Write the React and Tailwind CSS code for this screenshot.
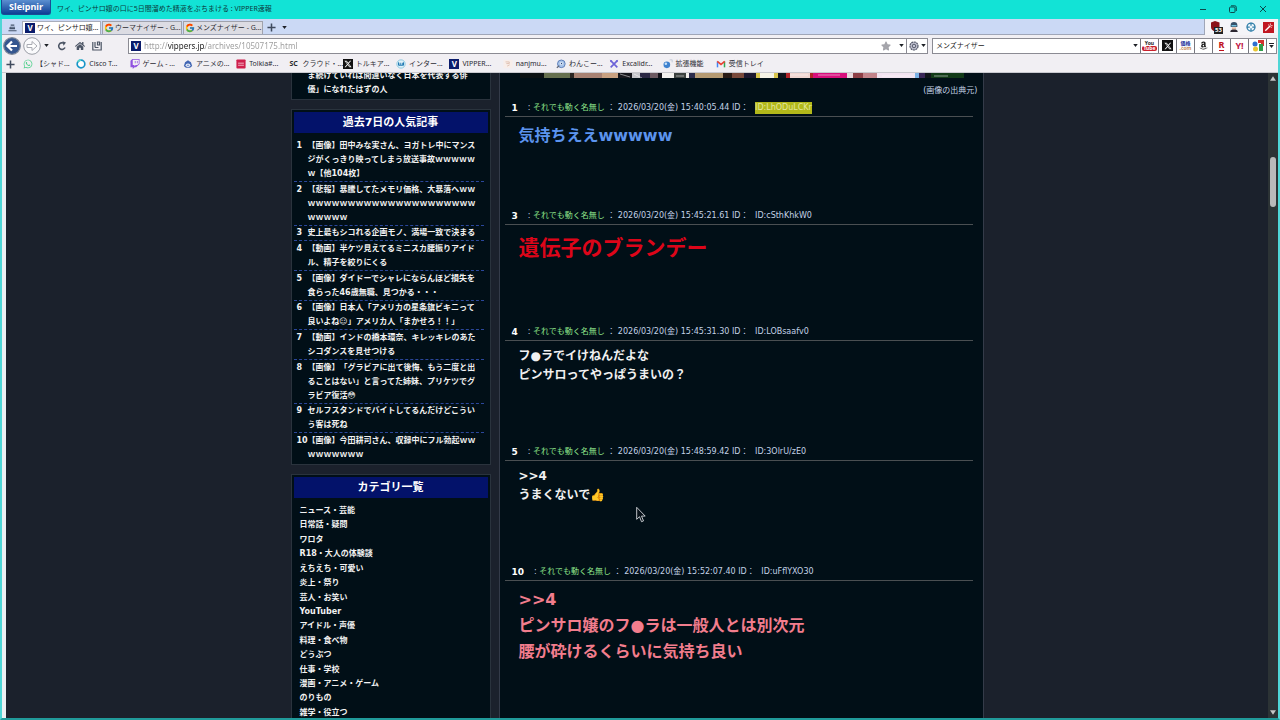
import React from "react";
import { FcGoogle } from "react-icons/fc";
import { FaWhatsapp, FaTwitch, FaStar, FaHome, FaAmazon } from "react-icons/fa";
import { FaXTwitter } from "react-icons/fa6";

const ranking = [
  "【画像】田中みな実さん、ヨガトレ中にマンスジがくっきり映ってしまう放送事故ｗｗｗｗｗｗ【他104枚】",
  "【悲報】暴騰してたメモリ価格、大暴落へｗｗｗｗｗｗｗｗｗｗｗｗｗｗｗｗｗｗｗｗｗｗｗｗｗｗｗｗ",
  "史上最もシコれる企画モノ、満場一致で決まる",
  "【動画】半ケツ見えてるミニスカ腰振りアイドル、精子を絞りにくる",
  "【画像】ダイドーでシャレにならんほど損失を食らった46歳無職、見つかる・・・",
  "【画像】日本人「アメリカの星条旗ビキニって良いよね☺」アメリカ人「まかせろ！！」",
  "【動画】インドの橋本環奈、キレッキレのあたシコダンスを見せつける",
  "【画像】「グラビアに出て後悔、もう二度と出ることはない」と言ってた姉妹、プリケツでグラビア復活😳",
  "セルフスタンドでバイトしてるんだけどこういう客は死ね",
  "【画像】今田耕司さん、収録中にフル勃起ｗｗｗｗｗｗｗｗｗ",
];

const categories = [
  "ニュース・芸能",
  "日常話・疑問",
  "ワロタ",
  "R18・大人の体験談",
  "えちえち・可愛い",
  "炎上・祭り",
  "芸人・お笑い",
  "YouTuber",
  "アイドル・声優",
  "料理・食べ物",
  "どうぶつ",
  "仕事・学校",
  "漫画・アニメ・ゲーム",
  "のりもの",
  "雑学・役立つ",
];

const posts = [
  {
    no: 1,
    time: "15:40:05.44",
    id: "ID:LhODuLCKr",
    marked: true,
    lines: ["気持ちええwwwww"],
    style: "text-[16px] leading-[26px] text-[#5c94ee]",
  },
  {
    no: 3,
    time: "15:45:21.61",
    id: "ID:cSthKhkW0",
    lines: ["遺伝子のブランデー"],
    style: "text-[21px] leading-[34px] text-[#dd0519]",
  },
  {
    no: 4,
    time: "15:45:31.30",
    id: "ID:LOBsaafv0",
    lines: ["フ●ラでイけねんだよな", "ピンサロってやっぱうまいの？"],
    style: "text-[12px] leading-[19px] text-[#f0f0f0]",
  },
  {
    no: 5,
    time: "15:48:59.42",
    id: "ID:3OlrU/zE0",
    lines: [">>4", "うまくないで👍"],
    style: "text-[12px] leading-[19px] text-[#f0f0f0]",
  },
  {
    no: 10,
    time: "15:52:07.40",
    id: "ID:uFflYXO30",
    lines: [">>4", "ピンサロ嬢のフ●ラは一般人とは別次元", "腰が砕けるくらいに気持ち良い"],
    style: "text-[16px] leading-[26px] text-[#f27d8d]",
  },
];

// x, width, colour of each slice of the thumbnail banner
const banner = [
  [0, 24, "#0c1214"], [24, 26, "#66704f"], [50, 4, "#2a2522"], [54, 28, "#a98273"], [82, 16, "#c9a181"],
  [98, 14, "#17171d"], [112, 8, "#c6c6cc"], [120, 10, "#2b2845"], [130, 8, "#6d5a62"], [138, 4, "#14131a"],
  [142, 12, "#f4f2f0"], [154, 12, "#3c4240"], [166, 3, "#f1efec"], [169, 6, "#2c2c4c"], [175, 28, "#b59a72"],
  [203, 9, "#2a1c16"], [212, 12, "#7a4a3c"], [224, 12, "#1c1830"], [236, 4, "#d9c54c"], [240, 14, "#f6f3e6"],
  [254, 4, "#d9c54c"], [258, 8, "#10131b"], [266, 4, "#b32429"], [270, 20, "#f0d6d1"], [290, 3, "#b32429"],
  [293, 34, "#d80f7c"], [327, 6, "#e9d7dc"], [333, 10, "#8e3f46"], [343, 14, "#c3848a"], [357, 38, "#f3e4f1"],
  [395, 4, "#7bb3e6"], [399, 6, "#3a2757"], [405, 6, "#111519"], [411, 33, "#123a17"],
];

function Caret({ className = "" }) {
  return (
    <svg viewBox="0 0 6 4" className={"w-[5px] h-[3px] shrink-0 " + className} aria-hidden="true">
      <path d="M0 0h6L3 4z" fill="#1d2026" />
    </svg>
  );
}

function VIcon() {
  return (
    <span className="w-[10px] h-[10px] shrink-0 bg-[#0b1c6b] text-white text-[8px] leading-[10px] font-bold text-center">V</span>
  );
}

function Plus() {
  return (
    <svg viewBox="0 0 10 10" className="w-[9px] h-[9px] shrink-0" aria-hidden="true">
      <path d="M5 .5v9M.5 5h9" stroke="#3f4a5e" strokeWidth="1.7" />
    </svg>
  );
}

const RingIcon = () => (
  <svg viewBox="0 0 12 12" className="w-full h-full">
    <path d="M6 1.4a4.6 4.6 0 1 0 0 9.2a4.6 4.6 0 1 0 0-9.2z" fill="#fff" stroke="#1795c8" strokeWidth="2" />
    <path d="M2 3.4A4.6 4.6 0 0 1 6 1.4" fill="none" stroke="#56d6c8" strokeWidth="2" />
  </svg>
);

const AnimeIcon = () => (
  <svg viewBox="0 0 12 12" className="w-full h-full">
    <path d="M1 8.5 2.5 4 6 1.5 9.5 4 11 8.5 8.5 10.5H3.5z" fill="#4266b3" />
    <ellipse cx="6" cy="7.5" rx="2.8" ry="2" fill="#f1f4fb" />
    <path d="M4.5 7.5h3" stroke="#4266b3" />
  </svg>
);

const TolkiaIcon = () => (
  <svg viewBox="0 0 12 12" className="w-full h-full">
    <rect x=".5" y=".5" width="11" height="11" rx="1" fill="#cf1f4d" />
    <path d="M2.5 5h7M2.5 7.5h7" stroke="#f6cdd8" />
  </svg>
);

const ScIcon = () => <span className="block text-[7px] leading-[10px] font-bold text-[#26272b]">SC</span>;

const XIcon = () => (
  <span className="flex w-full h-full items-center justify-center bg-[#111]">
    <FaXTwitter className="w-[8px] h-[8px] text-white" />
  </span>
);

const WaveIcon = () => (
  <svg viewBox="0 0 12 12" className="w-full h-full">
    <circle cx="6" cy="6" r="5" fill="#dff1f8" stroke="#7ec2dc" />
    <path d="M3 4v3.5h2V4.5M5 7.5h2.5V4.5M7.5 7.5H9V4" fill="none" stroke="#2079b3" strokeWidth="1.2" />
  </svg>
);

const NanjIcon = () => (
  <svg viewBox="0 0 12 12" className="w-full h-full">
    <rect x=".5" y="1" width="11" height="10" fill="#f8eeea" />
    <path d="M3 3.5h4.5v2H4M5 8.5l3-1.5" fill="none" stroke="#dcb9a8" />
  </svg>
);

const DogIcon = () => (
  <svg viewBox="0 0 12 12" className="w-full h-full">
    <circle cx="6.4" cy="5.8" r="4.6" fill="#a9c5ea" stroke="#4b6fb0" />
    <path d="M1 10.5 4 8" stroke="#5a6172" strokeWidth="1.4" />
    <path d="M4.5 5.5c1-2 3-2 4 0-1 2-3 2-4 0z" fill="#fff" />
    <circle cx="6.6" cy="5.4" r=".9" fill="#24427e" />
  </svg>
);

const ExcaliIcon = () => (
  <svg viewBox="0 0 12 12" className="w-full h-full">
    <path d="M2 2l8 8M10 2 2 10" stroke="#6c63d8" strokeWidth="2" />
    <path d="M1 1l3 1-2 2zM11 1 8 2l2 2z" fill="#6c63d8" />
  </svg>
);

const BallIcon = () => (
  <svg viewBox="0 0 12 12" className="w-full h-full">
    <circle cx="4.6" cy="7" r="4" fill="#3f82cf" />
    <circle cx="3.4" cy="5.6" r="1.5" fill="#c9e2f8" />
    <path d="M8 1h3v3" fill="none" stroke="#bcc5d3" />
  </svg>
);

const MailIcon = () => (
  <svg viewBox="0 0 12 12" className="w-full h-full">
    <path d="M1.8 10V3" stroke="#4285f4" strokeWidth="1.8" />
    <path d="M10.2 10V3" stroke="#34a853" strokeWidth="1.8" />
    <path d="M1.5 2.8 6 6.4l4.5-3.6" fill="none" stroke="#ea4335" strokeWidth="2" />
  </svg>
);

const bookmarks = [
  { label: "【シャド...", icon: <FaWhatsapp className="w-full h-full text-[#4fd08b]" /> },
  { label: "Cisco T...", icon: <RingIcon /> },
  { label: "ゲーム - ...", icon: <FaTwitch className="w-full h-full text-[#9052e0]" /> },
  { label: "アニメの...", icon: <AnimeIcon /> },
  { label: "Tolkia#...", icon: <TolkiaIcon /> },
  { label: "クラウド・...", icon: <ScIcon /> },
  { label: "トルキア...", icon: <XIcon /> },
  { label: "インター...", icon: <WaveIcon /> },
  { label: "VIPPER...", icon: <VIcon /> },
  { label: "nanjmu...", icon: <NanjIcon /> },
  { label: "わんこー...", icon: <DogIcon /> },
  { label: "Excalidr...", icon: <ExcaliIcon /> },
  { label: "拡張機能", icon: <BallIcon /> },
  { label: "受信トレイ", icon: <MailIcon /> },
];

const engines = [
  {
    name: "YouTube",
    icon: (
      <span className="flex flex-col items-center text-[5px] leading-[5px] font-bold">
        <span className="text-[#222]">You</span>
        <span className="px-px rounded-[2px] bg-[#c8202c] text-white">Tube</span>
      </span>
    ),
  },
  { name: "X", icon: <span className="w-[11px] h-[11px]"><XIcon /></span> },
  {
    name: "価格.com",
    icon: (
      <span className="flex flex-col items-center text-[5px] leading-[5px] font-bold text-[#1c2f9c]">
        <span>価格</span>
        <span className="text-[#c98a5a]">.com</span>
      </span>
    ),
  },
  { name: "Amazon", icon: <FaAmazon className="w-[9px] h-[9px] text-[#1b1b1b]" /> },
  { name: "楽天", icon: <span className="text-[9px] leading-[10px] font-bold text-[#bf0f1c] border-b border-[#bf0f1c]">R</span> },
  { name: "Yahoo!", icon: <span className="text-[9px] leading-[12px] font-bold text-[#c01544]">Y!</span> },
  {
    name: "Google",
    icon: (
      <svg viewBox="0 0 12 12" className="w-[12px] h-[12px]">
        <path d="M6 0h6v6H9V3H6z" fill="#d6322e" />
        <path d="M7 4h4v7H7z" fill="#2f9d4b" />
        <circle cx="3" cy="4" r="2.5" fill="#2f6fd0" />
        <circle cx="3.5" cy="9" r="2.5" fill="#e9c431" />
      </svg>
    ),
  },
];

function TitleBar() {
  return (
    <header className="flex h-[19px] shrink-0 items-start bg-[#12e3d6]">
      <button type="button" className="ml-px w-[50px] h-[15px] rounded-b-[3px] bg-linear-to-b from-[#5b8fd0] to-[#0d3f95] border border-t-0 border-[#1b4c94] text-white text-[9px] leading-[14px] font-bold">
        Sleipnir
      </button>
      <h1 className="ml-[6px] flex-1 text-[7px] leading-[18px] text-[#0b3b40]">ワイ、ピンサロ嬢の口に5日間溜めた精液をぶちまける : VIPPER速報</h1>
      <div className="flex h-[18px] items-center gap-[22px] pr-[13px] text-[#0b4a4c]">
        <button type="button" aria-label="最小化">
          <svg viewBox="0 0 8 8" className="w-[8px] h-[8px]"><path d="M1 4.5h6" stroke="currentColor" /></svg>
        </button>
        <button type="button" aria-label="元に戻す">
          <svg viewBox="0 0 8 8" className="w-[8px] h-[8px]" fill="none" stroke="currentColor">
            <rect x=".5" y="2" width="5.5" height="5.5" rx="1" />
            <path d="M2 .8h3.8a1.5 1.5 0 0 1 1.5 1.5V6" />
          </svg>
        </button>
        <button type="button" aria-label="閉じる">
          <svg viewBox="0 0 8 8" className="w-[8px] h-[8px]"><path d="M1 1l6 6M7 1 1 7" stroke="currentColor" /></svg>
        </button>
      </div>
    </header>
  );
}

function TabStrip() {
  return (
    <div className="flex h-[16px] shrink-0 bg-[#f4f4f8]">
      <div className="flex flex-1 items-end border-b border-r border-[#9fa6b8] bg-[#cbd9f5]">
        <button type="button" aria-label="タブ一覧" className="flex w-5 h-[13px] items-center justify-center">
          <svg viewBox="0 0 10 8" className="w-[9px] h-[8px]" fill="none" stroke="#46546c" strokeWidth="1.2">
            <path d="M3 .8h4M2.2 3.2h5.6M2.2 3.2v1.5h5.6M.5 7h9" />
          </svg>
        </button>
        <button type="button" className="flex w-[79px] h-[13px] items-center gap-[2px] pl-[2px] bg-white border border-b-0 border-[#a9adbb]">
          <VIcon />
          <span className="text-[7px] text-[#1b1b22] whitespace-nowrap">ワイ、ピンサロ嬢...</span>
        </button>
        <button type="button" className="ml-px flex w-[80px] h-[13px] items-center gap-px pl-px bg-[#dcdce3] border border-b-0 border-[#a0a2ac]">
          <FcGoogle className="w-[10px] h-[10px] shrink-0" />
          <span className="text-[7px] text-[#2c2c34] whitespace-nowrap">ウーマナイザー - G...</span>
        </button>
        <button type="button" className="ml-px flex w-[80px] h-[13px] items-center gap-px pl-px bg-[#dcdce3] border border-b-0 border-[#a0a2ac]">
          <FcGoogle className="w-[10px] h-[10px] shrink-0" />
          <span className="text-[7px] text-[#2c2c34] whitespace-nowrap">メンズナイザー - G...</span>
        </button>
        <button type="button" aria-label="新しいタブ" className="ml-[4px] flex h-[13px] items-center gap-[6px]">
          <Plus />
          <Caret />
        </button>
      </div>
      <div className="flex w-[73px] items-center justify-between pl-[5px] pr-[4px]">
        <button type="button" aria-label="uBlock" className="relative">
          <svg viewBox="0 0 12 12" className="w-[12px] h-[12px]">
            <path d="M1 1.5 5 0l4.5 1.5V6c0 2-2 3.5-4.5 4.5C2.500 9.500 1 8 1 6z" fill="#8b1118" />
          </svg>
          <span className="absolute left-[4px] top-[6px] px-px bg-[#222] text-white text-[6px] leading-[7px] font-bold">53</span>
        </button>
        <button type="button" aria-label="ユーザーエージェント">
          <svg viewBox="0 0 12 12" className="w-[10px] h-[10px]">
            <path d="M2 4a4 4 0 0 1 8 0v2H2z" fill="#35506a" />
            <path d="M3 4.500h6" stroke="#7dd0ee" strokeWidth="1.500" />
            <path d="M3.500 6.500h5V9h-5z" fill="#e3b59c" />
            <path d="M1.500 12c0-2.500 2-3 4.500-3s4.500.5 4.500 3z" fill="#2b2630" />
          </svg>
        </button>
        <button type="button" aria-label="ターゲット">
          <svg viewBox="0 0 12 12" className="w-[10px] h-[10px]">
            <circle cx="6" cy="6" r="4.800" fill="#eef6fb" stroke="#2f7da8" strokeWidth="1.500" />
            <path d="M6 1v3.500M6 7.500V11M1 6h3.500M7.500 6H11" stroke="#2f7da8" strokeWidth="1.500" />
          </svg>
        </button>
        <button type="button" aria-label="スタイル">
          <svg viewBox="0 0 12 12" className="w-[11px] h-[11px]">
            <rect width="12" height="12" fill="#c01722" />
            <path d="M2.500 9.500 8 4" stroke="#fff" strokeWidth="1.500" />
            <path d="M8 1.500v2M10.500 4h-2M5.500 3l1 .500M9.500 6.500l-1-1" stroke="#fff" strokeWidth=".8" />
          </svg>
        </button>
      </div>
    </div>
  );
}

function Toolbar() {
  return (
    <div className="flex h-[21px] shrink-0 items-center bg-[#f1eff3] text-[#4c5565]">
      <button type="button" aria-label="戻る" className="ml-px">
        <svg viewBox="0 0 18 18" className="w-[18px] h-[18px]">
          <circle cx="9" cy="9" r="8.300" fill="#34568f" stroke="#7c8798" strokeWidth="1.200" />
          <path d="M14 9H5M9 4.500 4.500 9 9 13.500" fill="none" stroke="#fff" strokeWidth="2.200" />
        </svg>
      </button>
      <button type="button" aria-label="進む" className="ml-[2px]">
        <svg viewBox="0 0 18 18" className="w-[18px] h-[18px]">
          <circle cx="9" cy="9" r="8.300" fill="#fafafc" stroke="#9b9ea6" strokeWidth="1" />
          <path d="M4 7.500h5V4.500L14 9l-5 4.500v-3H4z" fill="#fff" stroke="#a9abb3" />
        </svg>
      </button>
      <Caret className="ml-[3px]" />
      <button type="button" aria-label="更新" className="ml-[8px]">
        <svg viewBox="0 0 10 10" className="w-[10px] h-[10px]">
          <path d="M8 6.500A3.300 3.300 0 1 1 7 2.500" fill="none" stroke="currentColor" strokeWidth="1.600" />
          <path d="M5.500.3 9 1.500 6.500 4.700z" fill="currentColor" />
        </svg>
      </button>
      <button type="button" aria-label="ホーム" className="ml-[8px]"><FaHome className="w-[10px] h-[10px]" /></button>
      <button type="button" aria-label="履歴" className="ml-[7px]">
        <svg viewBox="0 0 10 10" className="w-[10px] h-[10px]" fill="none" stroke="currentColor" strokeWidth="1.200">
          <path d="M.8 1v8h8.400V1M3 1v5.500M3 6.500h3.500M5.500 1v3h2V1z" />
        </svg>
      </button>
      <div className="ml-[26px] flex flex-1 h-[16px] items-center bg-white border border-[#8b8b93]">
        <span className="ml-[2px] flex"><VIcon /></span>
        <input
          type="text"
          aria-label="アドレス"
          defaultValue="http://vippers.jp/archives/10507175.html"
          className="ml-[3px] flex-1 min-w-0 text-[8px] leading-[12px] text-transparent bg-clip-text bg-[linear-gradient(90deg,#9a9a9a_0px_24px,#1c1c1c_24px_61px,#9a9a9a_61px)] outline-none"
        />
        <FaStar className="w-[10px] h-[10px] text-[#a5a5ab]" />
        <Caret className="ml-[8px] mr-[2px]" />
        <button type="button" aria-label="設定" className="flex h-full items-center gap-[2px] pl-[2px] pr-px border-l border-[#8b8b93]">
          <svg viewBox="0 0 10 10" className="w-[10px] h-[10px]">
            <circle cx="5" cy="5" r="4" fill="#c4c5d4" stroke="#555a6a" strokeWidth="1.200" strokeDasharray="2 .6" />
            <circle cx="5" cy="5" r="1.800" fill="none" stroke="#555a6a" />
          </svg>
          <Caret />
        </button>
      </div>
      <div className="ml-[4px] mr-px flex h-[16px] items-stretch bg-white border border-[#8b8b93]">
        <div className="flex w-[207px] items-center pl-[3px] pr-[2px]">
          <input type="text" aria-label="検索" defaultValue="メンズナイザー" className="flex-1 min-w-0 text-[7px] leading-[12px] text-[#222] outline-none" />
          <Caret />
        </div>
        {engines.map(engine => (
          <button key={engine.name} type="button" aria-label={engine.name} className="flex w-[18px] items-center justify-center border-l border-[#77777f]">
            {engine.icon}
          </button>
        ))}
        <button type="button" aria-label="その他" className="flex flex-col w-[10px] items-center justify-center gap-px border-l border-[#77777f]">
          <span className="w-[5px] h-px bg-[#1d2026]" />
          <Caret />
        </button>
      </div>
    </div>
  );
}

function BookmarkBar() {
  return (
    <nav className="flex h-[17px] shrink-0 items-center pl-[4px] bg-[#f1eff3] border-b border-[#c9c9cf]">
      <button type="button" aria-label="ブックマークを追加"><Plus /></button>
      <div className="ml-[8px] flex w-[746px] justify-between">
        {bookmarks.map(item => (
          <a key={item.label} href="#bookmark" className="flex w-[53px] items-center gap-[3px] text-[7px] leading-[12px] text-[#2b2b33] whitespace-nowrap">
            <span className="w-[10px] h-[10px] shrink-0 flex">{item.icon}</span>
            {item.label}
          </a>
        ))}
      </div>
    </nav>
  );
}

function Panel({ title, children }) {
  return (
    <section className="p-[2px] bg-[#010f17] border border-[#2a333d]">
      <h2 className="h-[21px] bg-[#03126a] text-center text-[11px] leading-[21px] font-bold text-white">{title}</h2>
      {children}
    </section>
  );
}

function Sidebar() {
  return (
    <aside className="flex flex-col w-[200px] shrink-0 gap-[9px] text-[8px] leading-[14px] font-bold text-[#f2f2f2] [text-spacing-trim:space-all]">
      <section className="flex h-[27px] items-end pb-[2px] pl-[16px] pr-3 overflow-hidden bg-[#010f17] border border-t-0 border-[#2a333d]">
        <a href="#entry">ま続けていれば間違いなく日本を代表する俳優」になれたはずの人</a>
      </section>
      <Panel title="過去7日の人気記事">
        <ol className="mt-[6px] mr-[4px] flex flex-col justify-between h-[323px]">
          {ranking.map((entry, i) => (
            <li key={entry} className="flex border-b border-dashed border-[#2b479b] last:border-b-0">
              <span className="w-[11px] ml-[3px] shrink-0">{i + 1}</span>
              <a href="#entry" className="w-[172px] break-all">{entry}</a>
            </li>
          ))}
        </ol>
      </Panel>
      <Panel title="カテゴリ一覧">
        <ul className="mt-[6px] pl-[6px] flex flex-col justify-between h-[216px]">
          {categories.map(name => (
            <li key={name}><a href="#category">{name}</a></li>
          ))}
        </ul>
      </Panel>
    </aside>
  );
}

function Post({ post }) {
  return (
    <article className="pb-[59px]">
      <header className="flex items-center pl-[7px] border-b border-[#4a4f52] text-[8px] leading-[16px] text-[#c3d2e6] whitespace-pre">
        <b className="text-[9px] text-white">{post.no}</b>
        <span className="ml-[10px]">: </span>
        <span className="text-[#8fe58b]">それでも動く名無し</span>
        <span>{" ： 2026/03/20(金) " + post.time + " ID： "}</span>
        {post.marked
          ? <mark className="ml-[4px] h-[12px] leading-[12px] bg-[#b2b81a] text-[#e3e79c]">{post.id}</mark>
          : <span className="ml-[4px]">{post.id}</span>}
      </header>
      <div className={"pt-[6px] pl-[14px] font-bold " + post.style}>
        {post.lines.map(line => <p key={line}>{line}</p>)}
      </div>
    </article>
  );
}

function Thread() {
  return (
    <main className="flex-1 pl-[5px] pr-[10px] bg-[#010f17] border-x border-[#343b49] text-[8px]">
      <svg viewBox="0 0 444 5" className="ml-[15px] w-[444px] h-[5px]" preserveAspectRatio="none" aria-hidden="true">
        {banner.map(([x, width, fill]) => (
          <rect key={x} x={x} y="0" width={width} height="5" fill={fill} />
        ))}
        <path d="M100 1l10 3M114 1l8 4M156 3h8M270 2h18M298 2h22M362 3h28M414 3h14" stroke="#fff" strokeOpacity=".5" />
      </svg>
      <p className="mt-[6px] mb-[2px] -mr-[5px] text-right leading-[14px] text-[#c3d2e6]">
        <a href="#source">(画像の出典元)</a>
      </p>
      {posts.map(post => <Post key={post.no} post={post} />)}
    </main>
  );
}

function ScrollBar() {
  return (
    <div className="flex flex-col w-[10px] shrink-0 items-center bg-[#2c3335]">
      <svg viewBox="0 0 8 6" className="mt-[3px] w-[6px] h-[5px]"><path d="M4 0l4 6H0z" fill="#c4c6c6" /></svg>
      <div className="mt-[76px] w-[6px] h-[50px] rounded-[3px] bg-[#b9b9b9]" />
      <svg viewBox="0 0 8 6" className="mt-auto mb-[3px] w-[6px] h-[5px]"><path d="M4 6 0 0h8z" fill="#c4c6c6" /></svg>
    </div>
  );
}

export default function App() {
  return (
    <div className="relative flex flex-col h-screen overflow-hidden bg-[#12e3d6] font-['DejaVu_Sans','Noto_Sans_CJK_JP',sans-serif]">
      <div className="font-['Noto_Sans','Noto_Sans_CJK_JP',sans-serif]">
        <TitleBar />
        <div className="border-x-2 border-[#4fd6d6]">
          <TabStrip />
          <Toolbar />
          <BookmarkBar />
        </div>
      </div>
      <div className="flex flex-1 min-h-0 border-x-2 border-b-2 border-x-[#4fd6d6] border-b-[#209a9a]">
        <div className="w-[4px] shrink-0 bg-[#eceff2]" />
        <div className="flex-1 overflow-hidden bg-[#1b212c]">
          <div className="mx-auto flex w-[693px] gap-2">
            <Sidebar />
            <Thread />
          </div>
        </div>
        <ScrollBar />
      </div>
      <svg viewBox="0 0 10 16" className="absolute left-[636px] top-[506px] w-[10px] h-[17px]" aria-hidden="true">
        <path d="M.7.8v12l2.800-2.600 2 5 2-.8-2-4.800h3.700z" fill="#071018" stroke="#d5d8dc" strokeWidth=".9" />
      </svg>
    </div>
  );
}
